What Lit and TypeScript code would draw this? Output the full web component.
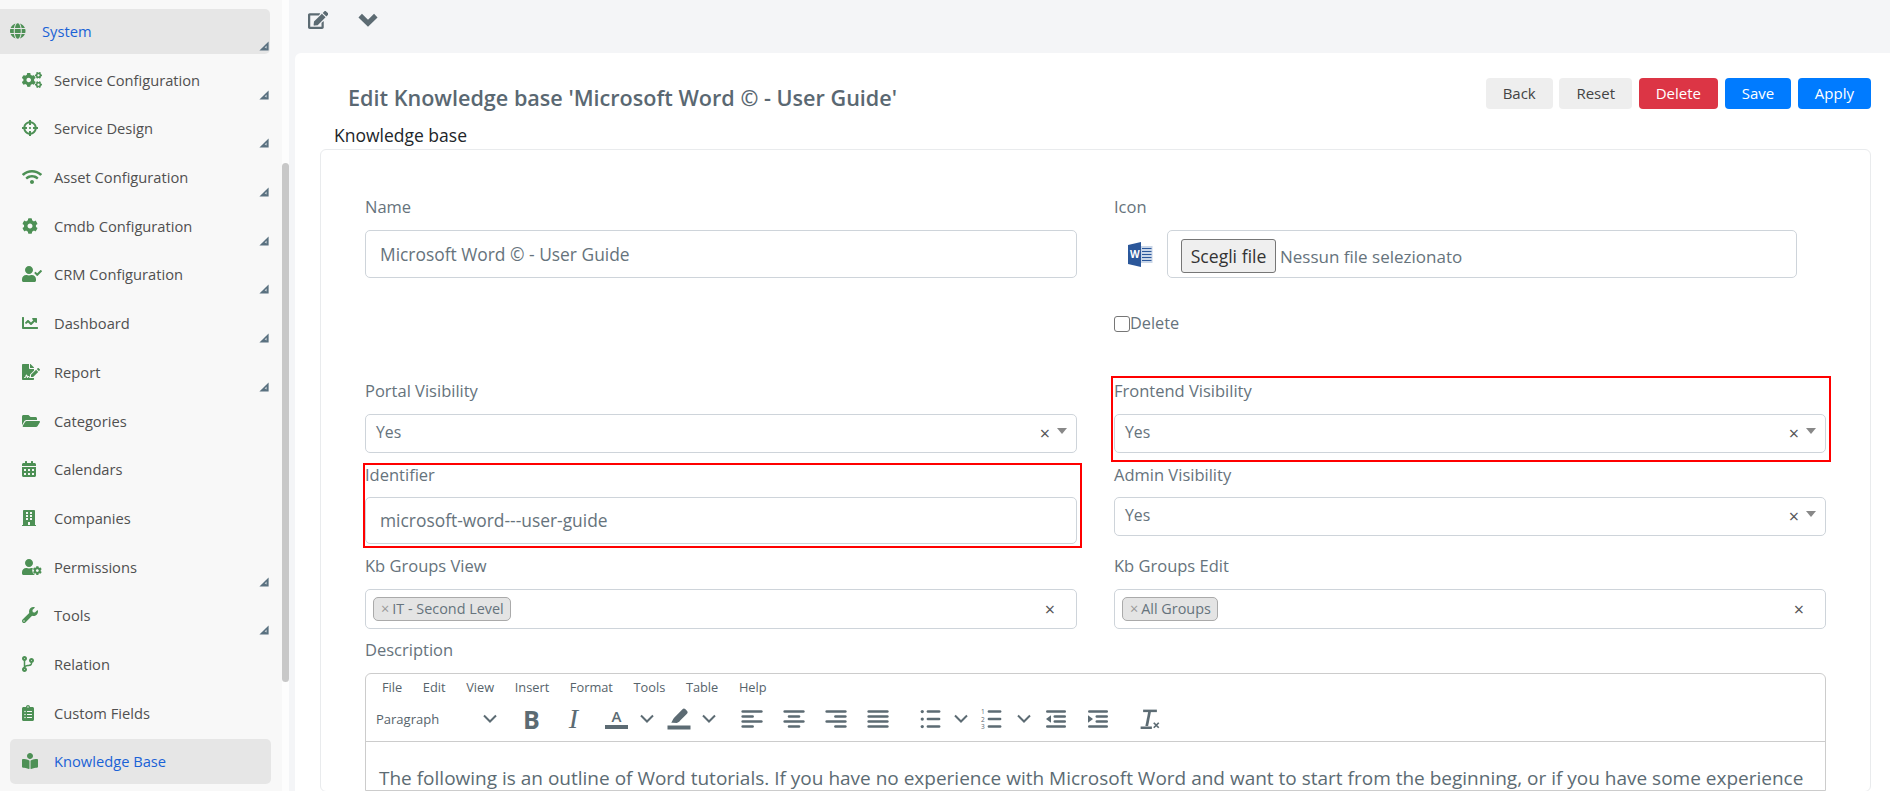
import { LitElement, html, css, svg } from "lit";
import { customElement } from "lit/decorators.js";

const USER = "M224 256c70.7 0 128-57.3 128-128S294.7 0 224 0 96 57.3 96 128s57.3 128 128 128zm89.6 32h-16.7c-22.2 10.2-46.9 16-72.9 16s-50.6-5.8-72.9-16h-16.7C60.2 288 0 348.2 0 422.4V464c0 26.5 21.5 48 48 48h352c26.5 0 48-21.5 48-48v-41.6c0-74.2-60.2-134.4-134.4-134.4z";
const COG = "M487.4 315.7l-42.6-24.6c4.3-23.2 4.3-47 0-70.2l42.6-24.6c4.9-2.8 7.1-8.6 5.5-14-11.1-35.6-30-67.8-54.7-94.6-3.8-4.1-10-5.1-14.8-2.3L380.8 110c-17.9-15.4-38.5-27.3-60.8-35.1V25.8c0-5.6-3.9-10.5-9.4-11.7-36.7-8.2-74.3-7.8-109.2 0-5.5 1.2-9.4 6.1-9.4 11.7V75c-22.2 7.9-42.8 19.8-60.8 35.1L88.7 85.5c-4.9-2.8-11-1.9-14.8 2.3-24.7 26.7-43.6 58.9-54.7 94.6-1.7 5.4.6 11.2 5.5 14L67.3 221c-4.3 23.2-4.3 47 0 70.2l-42.6 24.6c-4.9 2.8-7.1 8.6-5.5 14 11.1 35.6 30 67.8 54.7 94.6 3.8 4.1 10 5.1 14.8 2.3l42.6-24.6c17.9 15.4 38.5 27.3 60.8 35.1v49.2c0 5.6 3.9 10.5 9.4 11.7 36.7 8.2 74.3 7.8 109.2 0 5.5-1.2 9.4-6.1 9.4-11.7v-49.2c22.2-7.9 42.8-19.8 60.8-35.1l42.6 24.6c4.9 2.8 11 1.9 14.8-2.3 24.7-26.7 43.6-58.9 54.7-94.6 1.5-5.5-.7-11.3-5.6-14.1zM256 336c-44.1 0-80-35.9-80-80s35.9-80 80-80 80 35.9 80 80-35.9 80-80 80z";

type Ic = { w: number; d: string };
const I: Record<string, Ic> = {
  globe: { w: 496, d: "M336.5 160C322 70.7 287.8 8 248 8s-74 62.7-88.5 152h177zM152 256c0 22.2 1.2 43.5 3.3 64h185.3c2.1-20.5 3.3-41.8 3.3-64s-1.2-43.5-3.3-64H155.3c-2.1 20.5-3.3 41.8-3.3 64zm324.7-96c-28.6-67.9-86.5-120.4-158-141.6 24.4 33.8 41.2 84.7 50 141.6h108zM177.2 18.4C105.8 39.6 47.8 92.1 19.3 160h108c8.7-56.9 25.5-107.8 49.9-141.6zM487.4 192H372.7c2.1 21 3.3 42.5 3.3 64s-1.2 43-3.3 64h114.6c5.5-20.5 8.6-41.8 8.6-64s-3.1-43.5-8.5-64zM120 256c0-21.5 1.2-43 3.3-64H8.6C3.2 212.5 0 233.8 0 256s3.2 43.5 8.6 64h114.6c-2-21-3.2-42.5-3.2-64zm39.5 96c14.5 89.3 48.7 152 88.5 152s74-62.7 88.5-152h-177zm159.3 141.6c71.4-21.2 129.4-73.7 158-141.6h-108c-8.8 56.9-25.6 107.8-50 141.6zM19.3 352c28.6 67.9 86.5 120.4 158 141.6-24.4-33.8-41.2-84.7-50-141.6h-108z" },
  cogs: { w: 640, d: "M512.1 191l-8.2 14.3c-3 5.3-9.4 7.5-15.1 5.4-11.8-4.4-22.6-10.7-32.1-18.6-4.6-3.8-5.8-10.5-2.8-15.7l8.2-14.3c-6.9-8-12.3-17.3-15.9-27.4h-16.5c-6 0-11.2-4.3-12.2-10.3-2-12-2.1-24.6 0-37.1 1-6 6.2-10.4 12.2-10.4h16.5c3.6-10.1 9-19.4 15.9-27.4l-8.2-14.3c-3-5.2-1.9-11.9 2.8-15.7 9.5-7.9 20.4-14.2 32.1-18.6 5.7-2.1 12.1.1 15.1 5.4l8.2 14.3c10.5-1.9 21.2-1.9 31.7 0L552 6.3c3-5.3 9.4-7.5 15.1-5.4 11.8 4.4 22.6 10.7 32.1 18.6 4.6 3.8 5.8 10.5 2.8 15.7l-8.2 14.3c6.9 8 12.3 17.3 15.9 27.4h16.5c6 0 11.2 4.3 12.2 10.3 2 12 2.1 24.6 0 37.1-1 6-6.2 10.4-12.2 10.4h-16.5c-3.6 10.1-9 19.4-15.9 27.4l8.2 14.3c3 5.2 1.9 11.9-2.8 15.7-9.5 7.9-20.4 14.2-32.1 18.6-5.7 2.1-12.1-.1-15.1-5.4l-8.2-14.3c-10.4 1.9-21.2 1.9-31.7 0zm-10.5-58.8c38.5 29.6 82.4-14.3 52.8-52.8-38.5-29.7-82.4 14.3-52.8 52.8zM386.3 286.1l33.7 16.8c10.1 5.8 14.5 18.1 10.5 29.1-8.9 24.2-26.4 46.4-42.6 65.8-7.4 8.9-20.2 11.1-30.3 5.3l-29.1-16.8c-16 13.7-34.6 24.6-54.9 31.7v33.6c0 11.6-8.3 21.6-19.7 23.6-24.6 4.2-50.4 4.4-75.9 0-11.5-2-20-11.9-20-23.6V418c-20.3-7.2-38.9-18-54.9-31.7L74 403c-10 5.8-22.9 3.6-30.3-5.3-16.2-19.4-33.3-41.6-42.2-65.7-4-10.9.4-23.2 10.5-29.1l33.3-16.8c-3.9-20.9-3.9-42.4 0-63.4L12 205.8c-10.1-5.8-14.6-18.1-10.5-29 8.9-24.2 26-46.4 42.2-65.8 7.4-8.9 20.2-11.1 30.3-5.3l29.1 16.8c16-13.7 34.6-24.6 54.9-31.7V57.1c0-11.5 8.2-21.5 19.6-23.5 24.6-4.2 50.5-4.4 76-.1 11.5 2 20 11.9 20 23.6v33.6c20.3 7.2 38.9 18 54.9 31.7l29.1-16.8c10-5.8 22.9-3.6 30.3 5.3 16.2 19.4 33.2 41.6 42.1 65.8 4 10.9.1 23.2-10 29.1l-33.7 16.8c3.9 21 3.9 42.5 0 63.5zm-117.6 21.1c59.2-77-28.7-164.9-105.7-105.7-59.2 77 28.7 164.9 105.7 105.7zm243.4 182.7l-8.2 14.3c-3 5.3-9.4 7.5-15.1 5.4-11.8-4.4-22.6-10.7-32.1-18.6-4.6-3.8-5.8-10.5-2.8-15.7l8.2-14.3c-6.9-8-12.3-17.3-15.9-27.4h-16.5c-6 0-11.2-4.3-12.2-10.3-2-12-2.1-24.6 0-37.1 1-6 6.2-10.4 12.2-10.4h16.5c3.6-10.1 9-19.4 15.9-27.4l-8.2-14.3c-3-5.2-1.9-11.9 2.8-15.7 9.5-7.9 20.4-14.2 32.1-18.6 5.7-2.1 12.1.1 15.1 5.4l8.2 14.3c10.5-1.9 21.2-1.9 31.7 0l8.2-14.3c3-5.3 9.4-7.5 15.1-5.4 11.8 4.4 22.6 10.7 32.1 18.6 4.6 3.8 5.8 10.5 2.8 15.7l-8.2 14.3c6.9 8 12.3 17.3 15.9 27.4h16.5c6 0 11.2 4.3 12.2 10.3 2 12 2.1 24.6 0 37.1-1 6-6.2 10.4-12.2 10.4h-16.5c-3.6 10.1-9 19.4-15.9 27.4l8.2 14.3c3 5.2 1.9 11.9-2.8 15.7-9.5 7.9-20.4 14.2-32.1 18.6-5.7 2.1-12.1-.1-15.1-5.4l-8.2-14.3c-10.4 1.9-21.2 1.9-31.7 0zM501.6 431c38.5 29.6 82.4-14.3 52.8-52.8-38.5-29.6-82.4 14.3-52.8 52.8z" },
  cross: { w: 512, d: "M500 224h-30.364C455.724 130.325 381.675 56.276 288 42.364V12c0-6.627-5.373-12-12-12h-40c-6.627 0-12 5.373-12 12v30.364C130.325 56.276 56.276 130.325 42.364 224H12c-6.627 0-12 5.373-12 12v40c0 6.627 5.373 12 12 12h30.364C56.276 381.675 130.325 455.724 224 469.636V500c0 6.627 5.373 12 12 12h40c6.627 0 12-5.373 12-12v-30.364C381.675 455.724 455.724 381.675 469.636 288H500c6.627 0 12-5.373 12-12v-40c0-6.627-5.373-12-12-12zM288 404.634V364c0-6.627-5.373-12-12-12h-40c-6.627 0-12 5.373-12 12v40.634C165.826 392.232 119.783 346.243 107.366 288H148c6.627 0 12-5.373 12-12v-40c0-6.627-5.373-12-12-12h-40.634C119.768 165.826 165.757 119.783 224 107.366V148c0 6.627 5.373 12 12 12h40c6.627 0 12-5.373 12-12v-40.634C346.174 119.768 392.217 165.757 404.634 224H364c-6.627 0-12 5.373-12 12v40c0 6.627 5.373 12 12 12h40.634C392.232 346.174 346.243 392.217 288 404.634zM288 256c0 17.673-14.327 32-32 32s-32-14.327-32-32c0-17.673 14.327-32 32-32s32 14.327 32 32z" },
  wifi: { w: 640, d: "M634.91 154.88C457.74-8.99 182.19-8.93 5.09 154.88c-6.66 6.16-6.79 16.59-.35 22.98l34.24 33.97c6.14 6.1 16.02 6.23 22.4.38 145.92-133.68 371.3-133.71 517.25 0 6.38 5.85 16.26 5.71 22.4-.38l34.24-33.97c6.43-6.39 6.3-16.82-.36-22.98zM320 352c-35.35 0-64 28.65-64 64s28.65 64 64 64 64-28.65 64-64-28.65-64-64-64zm202.67-83.59c-115.26-101.93-290.21-101.82-405.34 0-6.9 6.1-7.12 16.69-.57 23.15l34.44 33.99c6 5.92 15.66 6.32 22.05.8 83.95-72.57 209.74-72.41 293.49 0 6.39 5.52 16.05 5.13 22.05-.8l34.44-33.99c6.56-6.46 6.33-17.06-.56-23.15z" },
  cog: { w: 512, d: COG },
  ucheck: { w: 640, d: USER + "zm323-128.4l-27.8-28.1c-4.6-4.7-12.1-4.7-16.8-.1l-104.8 104-45.5-45.8c-4.6-4.7-12.1-4.7-16.8-.1l-28.1 27.9c-4.7 4.6-4.7 12.1-.1 16.8l81.7 82.3c4.6 4.7 12.1 4.7 16.8.1l141.3-140.2c4.6-4.7 4.7-12.2.1-16.8z" },
  chart: { w: 512, d: "M496 384H64V80c0-8.84-7.16-16-16-16H16C7.16 64 0 71.16 0 80v336c0 17.67 14.33 32 32 32h464c8.84 0 16-7.16 16-16v-32c0-8.84-7.16-16-16-16zM464 96H345.94c-21.38 0-32.09 25.85-16.97 40.97l32.4 32.4L288 242.75l-73.37-73.37c-12.5-12.5-32.76-12.5-45.25 0l-68.69 68.69c-6.25 6.25-6.25 16.38 0 22.63l22.62 22.62c6.25 6.25 16.38 6.25 22.63 0L192 237.25l73.37 73.37c12.5 12.5 32.76 12.5 45.25 0l96-96 32.4 32.4c15.12 15.12 40.97 4.41 40.97-16.97V112c.01-8.84-7.15-16-15.99-16z" },
  report: { w: 576, d: "M218.17 424.14c-2.95-5.92-8.09-6.52-10.17-6.52s-7.22.59-10.02 6.19l-7.67 15.34c-6.37 12.78-25.03 11.37-29.48-2.09L144 386.59l-10.61 31.88c-5.89 17.66-22.38 29.53-41 29.53H80c-8.84 0-16-7.16-16-16s7.16-16 16-16h12.39c4.83 0 9.11-3.08 10.64-7.66l18.19-54.64c3.3-9.81 12.44-16.41 22.78-16.41s19.48 6.59 22.77 16.41l13.88 41.64c19.75-16.19 54.06-9.7 66 14.16 1.89 3.78 5.49 5.95 9.36 6.26v-82.12l128-127.09V160H248c-13.2 0-24-10.8-24-24V0H24C10.7 0 0 10.7 0 24v464c0 13.3 10.7 24 24 24h336c13.3 0 24-10.7 24-24v-40l-128-.11c-16.12-.31-30.58-9.28-37.83-23.75zM384 121.9c0-6.3-2.5-12.4-7-16.9L279.1 7c-4.5-4.5-10.6-7-17-7H256v128h128v-6.1zm-96 225.06V416h68.99l161.68-162.78-67.88-67.88L288 346.96zm280.54-179.63l-31.87-31.87c-9.94-9.94-26.07-9.94-36.01 0l-27.25 27.25 67.88 67.88 27.25-27.25c9.95-9.94 9.95-26.07 0-36.01z" },
  folder: { w: 576, d: "M572.694 292.093L500.27 416.248A63.997 63.997 0 0 1 444.989 448H45.025c-18.523 0-30.064-20.093-20.731-36.093l72.424-124.155A64 64 0 0 1 152 256h399.964c18.523 0 30.064 20.093 20.73 36.093zM152 224h328v-48c0-26.51-21.49-48-48-48H272l-64-64H48C21.49 64 0 85.49 0 112v278.046l69.077-118.418C86.214 242.25 117.989 224 152 224z" },
  cal: { w: 448, d: "M0 464c0 26.5 21.5 48 48 48h352c26.5 0 48-21.5 48-48V192H0v272zm320-196c0-6.6 5.4-12 12-12h40c6.6 0 12 5.4 12 12v40c0 6.6-5.4 12-12 12h-40c-6.6 0-12-5.4-12-12v-40zm0 128c0-6.6 5.4-12 12-12h40c6.6 0 12 5.4 12 12v40c0 6.6-5.4 12-12 12h-40c-6.6 0-12-5.4-12-12v-40zM192 268c0-6.6 5.4-12 12-12h40c6.6 0 12 5.4 12 12v40c0 6.6-5.4 12-12 12h-40c-6.6 0-12-5.4-12-12v-40zm0 128c0-6.6 5.4-12 12-12h40c6.6 0 12 5.4 12 12v40c0 6.6-5.4 12-12 12h-40c-6.6 0-12-5.4-12-12v-40zM64 268c0-6.6 5.4-12 12-12h40c6.6 0 12 5.4 12 12v40c0 6.6-5.4 12-12 12H76c-6.6 0-12-5.4-12-12v-40zm0 128c0-6.6 5.4-12 12-12h40c6.6 0 12 5.4 12 12v40c0 6.6-5.4 12-12 12H76c-6.6 0-12-5.4-12-12v-40zM400 64h-48V16c0-8.8-7.2-16-16-16h-32c-8.8 0-16 7.2-16 16v48H160V16c0-8.8-7.2-16-16-16h-32c-8.8 0-16 7.2-16 16v48H48C21.5 64 0 85.5 0 112v48h448v-48c0-26.5-21.5-48-48-48z" },
  building: { w: 448, d: "M436 480h-20V24c0-13.255-10.745-24-24-24H56C42.745 0 32 10.745 32 24v456H12c-6.627 0-12 5.373-12 12v20h448v-20c0-6.627-5.373-12-12-12zM128 76c0-6.627 5.373-12 12-12h40c6.627 0 12 5.373 12 12v40c0 6.627-5.373 12-12 12h-40c-6.627 0-12-5.373-12-12V76zm0 96c0-6.627 5.373-12 12-12h40c6.627 0 12 5.373 12 12v40c0 6.627-5.373 12-12 12h-40c-6.627 0-12-5.373-12-12v-40zm52 148h-40c-6.627 0-12-5.373-12-12v-40c0-6.627 5.373-12 12-12h40c6.627 0 12 5.373 12 12v40c0 6.627-5.373 12-12 12zm76 160h-64v-84c0-6.627 5.373-12 12-12h40c6.627 0 12 5.373 12 12v84zm64-172c0 6.627-5.373 12-12 12h-40c-6.627 0-12-5.373-12-12v-40c0-6.627 5.373-12 12-12h40c6.627 0 12 5.373 12 12v40zm0-96c0 6.627-5.373 12-12 12h-40c-6.627 0-12-5.373-12-12v-40c0-6.627 5.373-12 12-12h40c6.627 0 12 5.373 12 12v40zm0-96c0 6.627-5.373 12-12 12h-40c-6.627 0-12-5.373-12-12V76c0-6.627 5.373-12 12-12h40c6.627 0 12 5.373 12 12v40z" },
  wrench: { w: 512, d: "M507.73 109.1c-2.24-9.03-13.54-12.09-20.12-5.51l-74.36 74.36-67.88-11.31-11.31-67.88 74.36-74.36c6.62-6.62 3.43-17.9-5.66-20.16-47.38-11.74-99.55.91-136.58 37.93-39.64 39.64-50.55 97.1-34.05 147.2L18.74 402.76c-24.99 24.99-24.99 65.51 0 90.5 24.99 24.99 65.51 24.99 90.5 0l213.21-213.21c50.12 16.71 107.47 5.68 147.37-34.22 37.07-37.07 49.7-89.32 37.91-136.73zM64 472c-13.25 0-24-10.75-24-24 0-13.26 10.75-24 24-24s24 10.74 24 24c0 13.25-10.75 24-24 24z" },
  branch: { w: 384, d: "M384 144c0-44.2-35.8-80-80-80s-80 35.8-80 80c0 36.4 24.3 67.1 57.5 76.8-.6 16.1-4.2 28.5-11 36.9-15.4 19.2-49.3 22.4-85.2 25.7-28.2 2.6-57.4 5.4-81.3 16.9v-144c32.5-10.2 56-40.5 56-76.3 0-44.2-35.8-80-80-80S0 35.8 0 80c0 35.8 23.5 66.1 56 76.3v199.3C23.5 365.9 0 396.2 0 432c0 44.2 35.8 80 80 80s80-35.8 80-80c0-34-21.2-63.1-51.2-74.6 3.1-5.2 7.8-9.8 14.9-13.4 16.2-8.2 40.4-10.4 66.1-12.8 42.2-3.9 90-8.4 118.2-43.4 14-17.4 21.1-39.8 21.6-67.9 31.6-10.8 54.4-40.7 54.4-75.9zM80 64c8.8 0 16 7.2 16 16s-7.2 16-16 16-16-7.2-16-16 7.2-16 16-16zm0 384c-8.8 0-16-7.2-16-16s7.2-16 16-16 16 7.2 16 16-7.2 16-16 16zm224-320c8.8 0 16 7.2 16 16s-7.2 16-16 16-16-7.2-16-16 7.2-16 16-16z" },
  clip: { w: 384, d: "M336 64h-80c0-35.3-28.7-64-64-64s-64 28.7-64 64H48C21.5 64 0 85.5 0 112v352c0 26.5 21.5 48 48 48h288c26.5 0 48-21.5 48-48V112c0-26.5-21.5-48-48-48zM96 424c-13.3 0-24-10.7-24-24s10.7-24 24-24 24 10.7 24 24-10.7 24-24 24zm0-96c-13.3 0-24-10.7-24-24s10.7-24 24-24 24 10.7 24 24-10.7 24-24 24zm0-96c-13.3 0-24-10.7-24-24s10.7-24 24-24 24 10.7 24 24-10.7 24-24 24zm96-192c13.3 0 24 10.7 24 24s-10.7 24-24 24-24-10.7-24-24 10.7-24 24-24zm128 368c0 4.4-3.6 8-8 8H168c-4.4 0-8-3.6-8-8v-16c0-4.4 3.6-8 8-8h144c4.4 0 8 3.6 8 8v16zm0-96c0 4.4-3.6 8-8 8H168c-4.4 0-8-3.6-8-8v-16c0-4.4 3.6-8 8-8h144c4.4 0 8 3.6 8 8v16zm0-96c0 4.4-3.6 8-8 8H168c-4.4 0-8-3.6-8-8v-16c0-4.4 3.6-8 8-8h144c4.4 0 8 3.6 8 8v16z" },
  book: { w: 512, d: "M352 96c0-53.02-42.98-96-96-96s-96 42.98-96 96 42.98 96 96 96 96-42.98 96-96zM233.59 241.1c-59.33-36.32-155.43-46.3-203.79-49.05C13.55 191.13 0 203.51 0 219.14v222.8c0 14.33 11.59 26.28 26.49 27.05 43.66 2.29 131.99 10.68 193.04 41.43 9.37 4.72 20.48-1.71 20.48-11.87V252.56c-.01-4.67-2.32-8.95-6.42-11.46zm248.61-49.05c-48.35 2.74-144.46 12.73-203.78 49.05-4.1 2.51-6.41 6.96-6.41 11.63v245.79c0 10.19 11.14 16.63 20.54 11.9 61.04-30.72 149.32-39.11 192.97-41.4 14.9-.78 26.49-12.73 26.49-27.06V219.14c-.01-15.63-13.56-28.01-29.81-27.09z" },
  edit: { w: 576, d: "M402.6 83.2l90.2 90.2c3.8 3.8 3.8 10 0 13.8L274.4 405.6l-92.8 10.3c-12.4 1.4-22.9-9.1-21.5-21.5l10.3-92.8L388.8 83.2c3.8-3.8 10-3.8 13.8 0zm162-22.9l-48.8-48.8c-15.2-15.2-39.9-15.2-55.2 0l-35.4 35.4c-3.8 3.8-3.8 10 0 13.8l90.2 90.2c3.8 3.8 10 3.8 13.8 0l35.4-35.4c15.2-15.3 15.2-40 0-55.2zM384 346.2V448H64V128h229.8c3.2 0 6.2-1.3 8.5-3.5l40-40c7.6-7.6 2.2-20.5-8.5-20.5H48C21.5 64 0 85.5 0 112v352c0 26.5 21.5 48 48 48h352c26.5 0 48-21.5 48-48V306.2c0-10.7-12.9-16-20.5-8.5l-40 40c-2.2 2.3-3.5 5.3-3.5 8.5z" },
};

const fa = (name: string, h: number) => {
  const ic = I[name];
  return html`<svg class="fa" width=${(ic.w / 512) * h} height=${h} viewBox="0 0 ${ic.w} 512" fill="currentColor"><path d=${ic.d}></path></svg>`;
};

const ucog = html`<svg class="fa" width="20" height="16" viewBox="0 0 640 512" fill="currentColor"><path d=${USER}></path><circle cx="490" cy="370" r="160" fill="#f8f8f8"></circle><g transform="translate(345,225) scale(0.57)"><path d=${COG}></path></g></svg>`;

const corner = html`<svg class="corner" width="10" height="10" viewBox="0 0 10 10"><polygon points="9.6,0.4 9.6,9.6 0.4,9.6" fill="#5a7180"></polygon><polygon points="5.6,6.6 7.6,4.6 7.6,7.6 " fill="#c9d1d6"></polygon></svg>`;

const NAV: { t: string; i: string; c?: boolean; a?: boolean; top?: boolean }[] = [
  { t: "System", i: "globe", c: true, top: true },
  { t: "Service Configuration", i: "cogs", c: true },
  { t: "Service Design", i: "cross", c: true },
  { t: "Asset Configuration", i: "wifi", c: true },
  { t: "Cmdb Configuration", i: "cog", c: true },
  { t: "CRM Configuration", i: "ucheck", c: true },
  { t: "Dashboard", i: "chart", c: true },
  { t: "Report", i: "report", c: true },
  { t: "Categories", i: "folder" },
  { t: "Calendars", i: "cal" },
  { t: "Companies", i: "building" },
  { t: "Permissions", i: "ucog", c: true },
  { t: "Tools", i: "wrench", c: true },
  { t: "Relation", i: "branch" },
  { t: "Custom Fields", i: "clip" },
  { t: "Knowledge Base", i: "book", a: true },
];

const lines = (rows: [number, number][]) =>
  rows.map(([x, y], n) => svg`<rect x=${x} y=${5 + n * 4} width=${y} height="2" rx="1"></rect>`);
const tbIcon = (body: unknown) => html`<svg width="30" height="30" viewBox="0 0 24 24" fill="#5c6b73">${body}</svg>`;
const down = html`<svg width="16" height="10" viewBox="0 0 16 10" fill="none" stroke="#5c6b73" stroke-width="2"><polyline points="2,1.5 8,7.5 14,1.5"></polyline></svg>`;

const TOOLS: { w: number; c: unknown }[] = [
  { w: 47, c: html`<span class="tb-b">B</span>` },
  { w: 37, c: html`<span class="tb-i">I</span>` },
  { w: 49, c: html`<span class="tb-a">A</span>` },
  { w: 12, c: down },
  { w: 51, c: html`<svg width="24" height="22" viewBox="0 0 24 22" fill="#5c6b73"><path d="M15.5 1.2c.8-.8 2-.8 2.7-.1l1.9 1.9c.8.8.7 2-.1 2.7L13.2 12.4l-1 1.3-2.4 1.2-3.9-.1-1.6 0 1.9-3.9 1.2-1.4z"></path><rect x="0.5" y="17.5" width="23" height="4"></rect></svg>` },
  { w: 10, c: down },
  { w: 16.5, c: "" },
  { w: 42, c: tbIcon(lines([[3.5, 17], [3.5, 10], [3.5, 17], [3.5, 10]])) },
  { w: 42, c: tbIcon(lines([[3.5, 17], [7, 10], [3.5, 17], [7, 10]])) },
  { w: 42, c: tbIcon(lines([[3.5, 17], [10.5, 10], [3.5, 17], [10.5, 10]])) },
  { w: 42, c: tbIcon(lines([[3.5, 17], [3.5, 17], [3.5, 17], [3.5, 17]])) },
  { w: 17.5, c: "" },
  { w: 30, c: tbIcon(svg`<circle cx="5" cy="6" r="1.3"></circle><circle cx="5" cy="12" r="1.3"></circle><circle cx="5" cy="18" r="1.3"></circle><rect x="8.5" y="5" width="11" height="2" rx="1"></rect><rect x="8.5" y="11" width="11" height="2" rx="1"></rect><rect x="8.5" y="17" width="11" height="2" rx="1"></rect>`) },
  { w: 30, c: down },
  { w: 32, c: tbIcon(svg`<text x="3.2" y="8" class="nm">1</text><text x="3.2" y="14" class="nm">2</text><text x="3.2" y="20" class="nm">3</text><rect x="8.5" y="5" width="11" height="2" rx="1"></rect><rect x="8.5" y="11" width="11" height="2" rx="1"></rect><rect x="8.5" y="17" width="11" height="2" rx="1"></rect>`) },
  { w: 32, c: down },
  { w: 31, c: tbIcon(svg`<rect x="4" y="5" width="16" height="2" rx="1"></rect><rect x="10" y="9" width="10" height="2" rx="1"></rect><rect x="10" y="13" width="10" height="2" rx="1"></rect><rect x="4" y="17" width="16" height="2" rx="1"></rect><polygon points="8,9 8,15 4,12"></polygon>`) },
  { w: 53, c: tbIcon(svg`<rect x="4" y="5" width="16" height="2" rx="1"></rect><rect x="10" y="9" width="10" height="2" rx="1"></rect><rect x="10" y="13" width="10" height="2" rx="1"></rect><rect x="4" y="17" width="16" height="2" rx="1"></rect><polygon points="4,9 4,15 8,12"></polygon>`) },
  { w: 51, c: tbIcon(svg`<rect x="6.5" y="4.5" width="11" height="2"></rect><path d="M10.6 6h2.2l-2.3 11.5H8.3z"></path><rect x="4.5" y="18" width="9" height="2"></rect><path d="M15 15l4 4M19 15l-4 4" stroke="#5c6b73" stroke-width="1.4" fill="none"></path>`) },
];

const MENU = ["File", "Edit", "View", "Insert", "Format", "Tools", "Table", "Help"];

@customElement("app-root")
export class AppRoot extends LitElement {
  static styles = css`
    :host { display: block; height: 791px; overflow: hidden; font-family: "Open Sans", "Noto Sans", sans-serif; color: #66737c; background: #f4f5f7; }
    * { box-sizing: border-box; }
    .page { display: flex; height: 791px; }
    .side { width: 282px; flex: none; background: #f8f8f8; padding-top: 9px; display: flex; flex-direction: column; gap: 3.7px; overflow: hidden; }
    .item { position: relative; flex: none; height: 45px; display: flex; align-items: center; padding-left: 22px; padding-bottom: 1px; font-size: 14.7px; color: #505050; margin-right: 12px; }
    .item.top { padding-left: 10px; padding-bottom: 2px; border-radius: 0 5px 5px 0; background: #e6e6e6; color: #1a62d6; }
    .item.act { margin-left: 10px; padding-left: 12px; border-radius: 5px; background: #e6e6e6; color: #1a62d6; margin-right: 11px; }
    .ico { width: 32px; flex: none; display: flex; align-items: center; color: #4d9055; }
    .fa { display: block; }
    .corner { position: absolute; right: 1px; bottom: 3px; }
    .track { width: 7px; flex: none; background: #fdfdfd; padding-top: 163px; }
    .thumb { height: 519px; background: #c8c8c8; border-radius: 4px; }
    .main { flex: 1; min-width: 0; display: flex; flex-direction: column; padding-left: 6px; }
    .bar { height: 53px; flex: none; display: flex; gap: 30px; padding: 11px 0 0 13px; color: #5c6b73; align-items: flex-start; }
    .dn { display: block; margin-top: 2px; }
    .card { flex: 1; background: #fff; border-radius: 6px 0 0 0; padding: 25px 19px 0 25px; min-height: 0; }
    .head { display: flex; justify-content: space-between; align-items: flex-start; height: 34px; }
    h1 { margin: 8px 0 0 28px; font-size: 21.6px; line-height: 24px; font-weight: 600; color: #5a6872; white-space: nowrap; }
    .btns { display: flex; gap: 6.7px; }
    .btn { height: 31px; padding: 0 17px; border: 0; border-radius: 4px; font: 400 15px/31px "Open Sans", sans-serif; background: #eee; color: #444; }
    .btn.red { background: #dc3545; color: #fff; }
    .btn.blue { background: #007bff; color: #fff; }
    .tab { margin: 11px 0 2px 14px; line-height: 24px; font-size: 17.5px; font-weight: 500; color: #212529; }
    .panel { border: 1px solid #e9ebed; border-radius: 6px; padding: 45px 44px 0 44px; }
    .grid { display: grid; grid-template-columns: 712px 712px; column-gap: 37px; row-gap: 10px; }
    .field { position: relative; }
    .lbl { display: block; font-size: 16.5px; line-height: 24px; margin-bottom: 11px; color: #66737c; }
    .field.tight .lbl { margin-bottom: 10px; }
    .full { grid-column: 1 / 3; margin-top: -1px; }
    .box { border: 1px solid #ced4da; border-radius: 5px; display: flex; align-items: center; background: #fff; font-size: 15.8px; color: #66737c; }
    .text { height: 47px; padding: 0 0 1px 14px; font-size: 17.4px; }
    .text.name { height: 48px; padding-bottom: 0; }
    .sel { height: 39px; padding: 0 0 3px 10px; position: relative; }
    .sel .x { position: absolute; right: 26px; top: 8px; font-size: 18px; line-height: 20px; color: #555; }
    .sel .arrow { position: absolute; right: 9px; top: 13px; width: 0; height: 0; border: 5px solid transparent; border-top: 6px solid #888; border-bottom: 0; }
    .multi { height: 40px; padding-left: 7px; position: relative; }
    .multi .x { position: absolute; right: 21px; top: 9px; font-size: 18px; line-height: 20px; color: #555; }
    .tag { height: 24px; display: flex; align-items: center; gap: 3px; padding: 0 6px 0 7px; background: #e4e4e4; border: 1px solid #aaa; border-radius: 5px; font-size: 14.4px; color: #66737c; margin-top: -1px; }
    .tag i { font-style: normal; color: #999; }
    .iconrow { display: flex; align-items: center; gap: 14px; padding-left: 14px; }
    .iconrow .box { flex: none; width: 630px; height: 48px; padding-left: 13px; gap: 4px; }
    .file { height: 34px; width: 95px; padding: 0; background: #efefef; border: 1px solid #767676; border-radius: 3px; font: 400 17.6px "Open Sans", sans-serif; color: #333; margin-top: 4px; }
    .nofile { margin-top: 4px; font-size: 17px; }
    .del { display: flex; align-items: center; margin-top: 33px; padding-bottom: 35px; height: 58px; line-height: 24px; font-size: 16.3px; }
    .cb { width: 16px; height: 16px; flex: none; border: 1px solid #767676; border-radius: 3px; background: #fff; margin-top: 2px; }
    .mark { position: absolute; border: 2px solid #f00; pointer-events: none; }
    .m1 { left: -2px; right: -5px; top: 0; bottom: -4px; }
    .m2 { left: -3px; right: -5px; top: -3px; bottom: -9px; }
    .ed { border: 1px solid #ccc; border-radius: 6px 6px 0 0; background: #fff; }
    .menu { height: 27px; display: flex; padding: 0 0 2px 16px; align-items: center; font-size: 12.8px; color: #56636b; }
    .menu span { margin-right: 20.6px; }
    .tools { height: 41px; padding-bottom: 4px; border-bottom: 1px solid #ccc; display: flex; align-items: center; }
    .para { width: 142px; flex: none; padding-left: 10px; display: flex; align-items: center; font-size: 13px; color: #56636b; }
    .para span { width: 106px; }
    .tool { flex: none; display: flex; justify-content: center; align-items: center; height: 30px; }
    .tool svg { flex: none; overflow: visible; }
    .tb-b { font: 700 25px/30px "Open Sans", sans-serif; color: #5c6b73; }
    .tb-i { font: italic 400 28px/30px "Liberation Serif", serif; color: #5c6b73; }
    .tb-a { font: 600 15px/17px "Open Sans", sans-serif; color: #5c6b73; width: 23px; text-align: center; border-bottom: 4px solid #5c6b73; margin-top: -1px; }
    .nm { font: 400 5.2px "Open Sans", sans-serif; fill: #5c6b73; }
    .body { padding: 24px 0 0 13px; font-size: 19px; line-height: 24px; white-space: nowrap; color: #5c6b73; }
  `;

  render() {
    return html`<div class="page">
      <nav class="side">
        ${NAV.map((n) => html`<div class="item ${n.top ? "top" : ""} ${n.a ? "act" : ""}">
          <span class="ico">${n.i === "ucog" ? ucog : fa(n.i, 16)}</span><span>${n.t}</span>${n.c ? corner : ""}
        </div>`)}
      </nav>
      <div class="track"><div class="thumb"></div></div>
      <div class="main">
        <div class="bar">${fa("edit", 18)}<svg class="dn" width="20" height="14" viewBox="0 0 20 14" fill="none" stroke="currentColor" stroke-width="5" stroke-linejoin="miter"><polyline points="2.2,2.6 10,10.2 17.8,2.6"></polyline></svg></div>
        <div class="card">
          <div class="head">
            <h1>Edit Knowledge base 'Microsoft Word © - User Guide'</h1>
            <div class="btns">
              <button class="btn">Back</button><button class="btn">Reset</button><button class="btn red">Delete</button><button class="btn blue">Save</button><button class="btn blue">Apply</button>
            </div>
          </div>
          <div class="tab">Knowledge base</div>
          <div class="panel">
            <div class="grid">
              <div class="field"><span class="lbl">Name</span><div class="box text name">Microsoft Word © - User Guide</div></div>
              <div class="field">
                <span class="lbl">Icon</span>
                <div class="iconrow">
                  <svg width="25" height="25" viewBox="0 0 25 25"><path d="M0 3 L13 0 V25 L0 22Z" fill="#2b579a"></path><rect x="13" y="4" width="11.5" height="17" fill="#c9d6e8"></rect><path d="M14 6.5h9.5M14 9.5h9.5M14 12.5h9.5M14 15.5h9.5M14 18.5h9.5" stroke="#2b579a" stroke-width="1"></path><text x="2" y="16" font-family="Open Sans" font-size="10" font-weight="700" fill="#fff">W</text></svg>
                  <div class="box"><button class="file">Scegli file</button><span class="nofile">Nessun file selezionato</span></div>
                </div>
                <div class="del"><span class="cb"></span><span>Delete</span></div>
              </div>
              <div class="field"><span class="lbl">Portal Visibility</span><div class="box sel">Yes<span class="x">×</span><span class="arrow"></span></div></div>
              <div class="field"><span class="lbl">Frontend Visibility</span><div class="box sel">Yes<span class="x">×</span><span class="arrow"></span></div><div class="mark m2"></div></div>
              <div class="field tight"><span class="lbl">Identifier</span><div class="box text">microsoft-word---user-guide</div><div class="mark m1"></div></div>
              <div class="field tight"><span class="lbl">Admin Visibility</span><div class="box sel">Yes<span class="x">×</span><span class="arrow"></span></div></div>
              <div class="field"><span class="lbl">Kb Groups View</span><div class="box multi"><span class="tag"><i>×</i>IT - Second Level</span><span class="x">×</span></div></div>
              <div class="field"><span class="lbl">Kb Groups Edit</span><div class="box multi"><span class="tag"><i>×</i>All Groups</span><span class="x">×</span></div></div>
              <div class="field full">
                <span class="lbl">Description</span>
                <div class="ed">
                  <div class="menu">${MENU.map((m) => html`<span>${m}</span>`)}</div>
                  <div class="tools">
                    <div class="para"><span>Paragraph</span>${down}</div>
                    ${TOOLS.map((t) => html`<div class="tool" style="width:${t.w}px">${t.c}</div>`)}
                  </div>
                  <div class="body">The following is an outline of Word tutorials. If you have no experience with Microsoft Word and want to start from the beginning, or if you have some experience</div>
                </div>
              </div>
            </div>
          </div>
        </div>
      </div>
    </div>`;
  }
}
